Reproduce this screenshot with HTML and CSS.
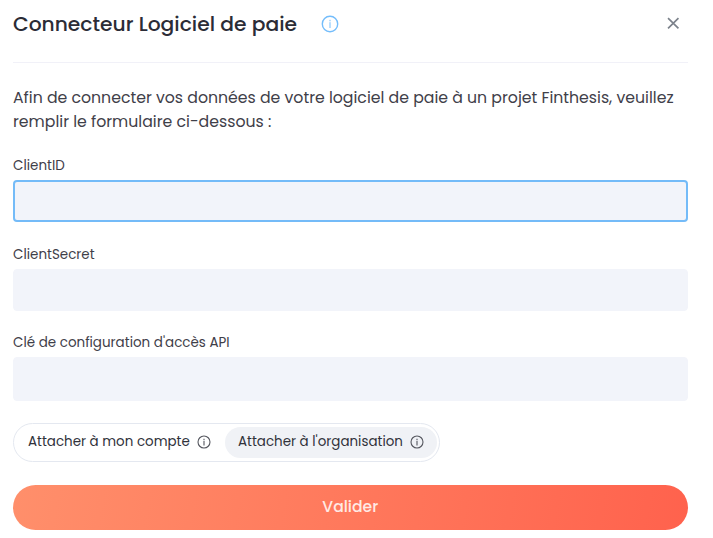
FILE: index.html
```html
<!DOCTYPE html>
<html lang="fr">

<head>
    <meta charset="UTF-8">
    <title>Connecteur Logiciel de paie</title>
    <link rel="stylesheet" href="styles.css">
</head>

<body>
    <div class="modal">
        <!-- Header -->
        <div class="modal-header">
            <h2>Connecteur Logiciel de paie</h2>
            <svg class="title-info" viewBox="0 0 18 18">
                <circle cx="9" cy="9" r="7.7" />
                <path d="M9 7.2v5.8M9 4.8v1.5" />
            </svg>
            <button type="button" class="close" aria-label="Fermer">
                <svg viewBox="0 0 12 12">
                    <path d="M1 1l10 10M11 1L1 11" />
                </svg>
            </button>
        </div>

        <p class="intro">Afin de connecter vos données de votre logiciel de paie à un projet Finthesis, veuillez<br>remplir le formulaire ci-dessous :</p>

        <!-- Form -->
        <form>
            <div class="field">
                <label for="clientId">ClientID</label>
                <input type="text" id="clientId" class="active">
            </div>
            <div class="field">
                <label for="clientSecret">ClientSecret</label>
                <input type="text" id="clientSecret">
            </div>
            <div class="field">
                <label for="apiKey">Clé de configuration d'accès API</label>
                <input type="text" id="apiKey">
            </div>

            <div class="switch">
                <div class="option">
                    <span>Attacher à mon compte</span>
                    <svg viewBox="0 0 14 14">
                        <circle cx="7" cy="7" r="6" />
                        <path d="M7 5.8v4.6M7 3.8v1.2" />
                    </svg>
                </div>
                <div class="option selected">
                    <span>Attacher à l'organisation</span>
                    <svg viewBox="0 0 14 14">
                        <circle cx="7" cy="7" r="6" />
                        <path d="M7 5.8v4.6M7 3.8v1.2" />
                    </svg>
                </div>
            </div>

            <button type="button" class="submit">Valider</button>
        </form>
    </div>
</body>

</html>
```
FILE: styles.css
```css
* {
    box-sizing: border-box;
}

body {
    margin: 0;
    background: #fff;
    color: #3f4049;
    font-family: Poppins, Inter, sans-serif;
}

.modal {
    width: 687.5px;
    padding-left: 13px;
}

/* Header */
.modal-header {
    display: flex;
    align-items: center;
    height: 63px;
    padding-bottom: 15px;
    border-bottom: 1px solid #f1f1f8;
}

.modal-header h2 {
    margin: 0;
    width: 284px;
    color: #2b2c36;
    font-size: 20.25px;
    font-weight: 500;
    line-height: 30px;
    white-space: nowrap;
}

.title-info {
    width: 18px;
    height: 18px;
    margin-left: 24px;
    fill: none;
    stroke: #74bdfb;
    stroke-width: 1.4;
}

.title-info path {
    stroke-width: 1;
}

.close {
    display: flex;
    margin-left: auto;
    padding: 0;
    margin-right: 8px;
    border: none;
    background: none;
}

.close svg {
    width: 12.5px;
    height: 12.5px;
    fill: none;
    stroke: #7c828b;
    stroke-width: 1.6;
}

.intro {
    margin: 23px 0 0;
    font-size: 15.73px;
    line-height: 24px;
    white-space: nowrap;
}

/* Fields */
form {
    margin-top: 22px;
}

.field {
    height: 88.5px;
}

.field label {
    display: block;
    height: 25px;
    font-size: 13.48px;
    line-height: 20px;
}

.field input {
    display: block;
    width: 100%;
    height: 42px;
    margin-top: -1px;
    padding: 0 12px;
    border: 1px solid #f2f4fa;
    border-radius: 4px;
    outline: none;
    background: #f2f4fa;
}

.field:nth-child(3) input {
    height: 44px;
}

.field input.active {
    border: 2px solid #74bbf8;
}

/* Account / organisation switch */
.switch {
    display: flex;
    width: 427px;
    height: 39px;
    margin-top: 1px;
    padding: 3px 2px 3px 3px;
    border: 1px solid #e4e8f0;
    border-radius: 20px;
}

.option {
    display: flex;
    align-items: center;
    gap: 7px;
    padding: 0 11px;
    border-radius: 16px;
    color: #30323b;
    font-size: 13.45px;
    white-space: nowrap;
}

.option svg {
    width: 14px;
    height: 14px;
    fill: none;
    stroke: #55575f;
    stroke-width: 1.1;
}

.option.selected {
    width: 212px;
    margin-left: auto;
    padding-left: 13px;
    background: #f0f2f6;
}

.submit {
    display: block;
    width: 100%;
    height: 45px;
    margin-top: 23px;
    padding: 0 0 2px;
    border: none;
    border-radius: 23px;
    background: linear-gradient(100deg, #ff8f6b, #ff624d);
    color: #ffeae5;
    font-family: inherit;
    font-size: 15.6px;
    font-weight: 500;
}
```
